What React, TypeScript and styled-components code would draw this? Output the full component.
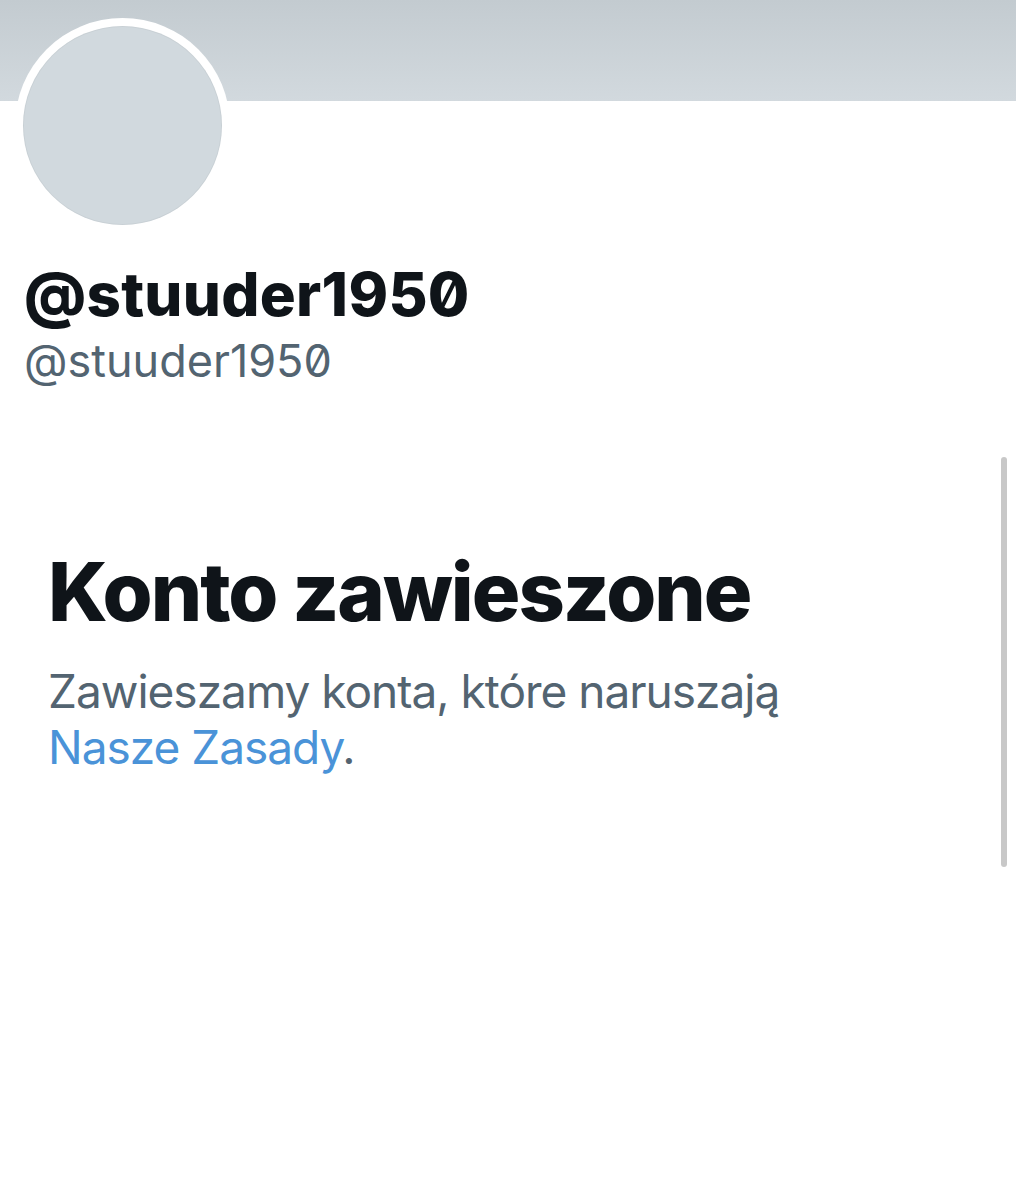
import React from "react";
import styled, { createGlobalStyle } from "styled-components";

const Global = createGlobalStyle`
  html, body { margin: 0; padding: 0; background: #ffffff; }
  body { font-family: Inter, "Noto Sans", "Liberation Sans", sans-serif; }
`;

const Page = styled.div`
  position: relative;
  width: 1016px;
  height: 1200px;
  overflow: hidden;
  background: #ffffff;
`;

const Banner = styled.div`
  height: 101px;
  background: linear-gradient(180deg, #c3cbd0 0%, #d2d9de 100%);
`;

const AvatarRing = styled.div`
  margin: -83px 0 0 15px;
  width: 215px;
  height: 215px;
  box-sizing: border-box;
  border-radius: 50%;
  background: #ffffff;
  padding: 8px;
`;

const AvatarFill = styled.div`
  width: 100%;
  height: 100%;
  border-radius: 50%;
  background: #d1d9de;
  box-shadow: inset 0 0 0 1px rgba(0, 0, 0, 0.04);
`;

const Identity = styled.div`
  padding: 0 0 0 24px;
  margin-top: 25px;
  display: flex;
  flex-direction: column;
`;

const DisplayName = styled.div`
  font-size: 60px;
  font-weight: 800;
  color: #0f1419;
  line-height: 72px;
  letter-spacing: 0.3px;
  font-feature-settings: "zero" 1;
`;

const Handle = styled.div`
  font-size: 45px;
  font-weight: 400;
  color: #536471;
  line-height: 62px;
  font-feature-settings: "zero" 1;
`;

const Notice = styled.section`
  padding: 0 0 0 48px;
  margin-top: 152px;
  display: flex;
  flex-direction: column;
`;

const Title = styled.h1`
  margin: 0;
  font-size: 81px;
  font-weight: 800;
  color: #0f1419;
  line-height: 96px;
  letter-spacing: -2px;
`;

const Body = styled.p`
  margin: 23px 0 0;
  font-size: 46px;
  font-weight: 400;
  color: #536471;
  line-height: 56px;
  width: 760px;
  letter-spacing: -1px;
`;

const Link = styled.a`
  color: #4a93d8;
  text-decoration: none;
`;

const ScrollThumb = styled.div`
  position: absolute;
  top: 457px;
  right: 9px;
  width: 6px;
  height: 410px;
  border-radius: 3px;
  background: #c8c8c8;
`;

export default function App() {
  return (
    <Page>
      <Global />
      <Banner />
      <AvatarRing>
        <AvatarFill />
      </AvatarRing>
      <Identity>
        <DisplayName>@stuuder1950</DisplayName>
        <Handle>@stuuder1950</Handle>
      </Identity>
      <Notice>
        <Title>Konto zawieszone</Title>
        <Body>
          Zawieszamy konta, które naruszają <Link href="#">Nasze Zasady</Link>.
        </Body>
      </Notice>
      <ScrollThumb />
    </Page>
  );
}
